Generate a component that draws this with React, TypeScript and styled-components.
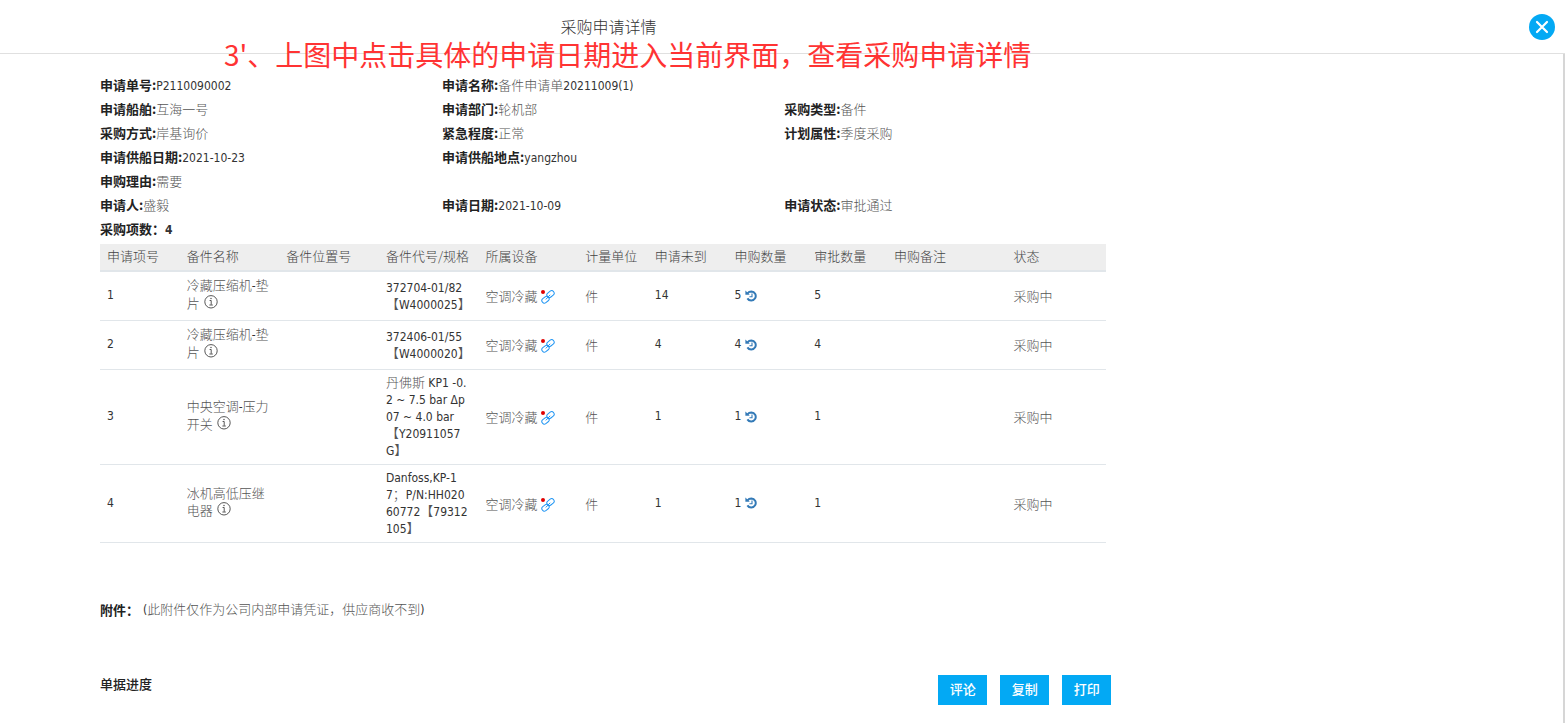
import React from 'react';
import styled, { createGlobalStyle } from 'styled-components';

const GlobalStyle = createGlobalStyle`
  * { box-sizing: border-box; }
  body {
    margin: 0;
    background: #fff;
    color: #555;
    font-family: "Noto Sans CJK SC", sans-serif;
    font-size: 13px;
    font-weight: 300;
    line-height: 17px;
  }
`;

const Page = styled.div`
  position: relative;
  display: flex;
  flex-direction: column;
  min-height: 100vh;
`;

const Header = styled.header`
  display: flex;
  align-items: center;
  height: 54px;
  padding-right: 10px;
  border-bottom: 1px solid #e0e0e0;
`;

const Title = styled.h1`
  flex: 1;
  margin: 0 312px 2px 0;
  text-align: center;
  font-size: 16px;
  font-weight: 300;
  line-height: 24px;
  color: #333;
`;

const CloseButton = styled.button`
  display: flex;
  align-items: center;
  justify-content: center;
  width: 26px;
  height: 26px;
  padding: 0;
  border: 0;
  border-radius: 50%;
  background: #03a9f4;
  cursor: pointer;
`;

const Note = styled.p`
  position: absolute;
  top: 40px;
  left: 224px;
  margin: 0;
  color: #ff3333;
  font-size: 28px;
  font-weight: 400;
  line-height: 28px;
  white-space: nowrap;
`;

const Body = styled.main`
  flex: 1;
  padding: 19px calc(29% - 2px) 18px 100px;
  border-right: 2px solid #d6d6d6;
`;

const Latin = styled.span`
  font-family: "DejaVu Sans Condensed", "DejaVu Sans", sans-serif;
  font-size: 12px;
  color: #333;
`;

const Details = styled.dl`
  display: grid;
  grid-template-columns: 34% 34% 1fr;
  grid-auto-rows: 24px;
  margin: 0 0 3px;
  line-height: 24px;
`;

const Field = styled.div<{ $column: number }>`
  grid-column: ${({ $column }) => $column};
  display: flex;
  white-space: nowrap;
`;

const Label = styled.dt`
  color: #222;
  font-weight: 700;
`;

const Value = styled.dd<{ $bold?: boolean }>`
  margin: 0;
  font-weight: ${({ $bold }) => ($bold ? 700 : 300)};
`;

const Record = styled.div`
  padding-right: 5px;
`;

const Table = styled.table`
  width: 100%;
  table-layout: fixed;
  border-collapse: separate;
  border-spacing: 0;
`;

const HeadCell = styled.th`
  height: 28px;
  padding: 0 7px 3px;
  background: #eee;
  border-bottom: 2px solid #e1e6ea;
  font-weight: 300;
  text-align: left;
  white-space: nowrap;
  color: #444;
`;

const Row = styled.tr`
  height: 49px;
`;

const Cell = styled.td`
  padding: 4px 7px 5px;
  border-bottom: 1px solid #e1e6ea;
  vertical-align: middle;
  white-space: nowrap;
`;

const NameCell = styled(Cell)`
  padding: 3px 7px 8px;
`;

const Line = styled.div<{ $gap?: number }>`
  display: flex;
  align-items: center;
  gap: ${({ $gap = 4 }) => $gap}px;
  height: 17px;
`;

const IconButton = styled.button`
  display: inline-flex;
  padding: 0;
  border: 0;
  background: none;
  cursor: pointer;
`;

const Attachment = styled.section`
  display: flex;
  align-items: center;
  gap: 4px;
  margin-top: 54px;
  line-height: 24px;
`;

const SectionTitle = styled.h2<{ $weight?: number }>`
  margin: 0;
  color: #222;
  font-size: 13px;
  font-weight: ${({ $weight = 700 }) => $weight};
  line-height: 17px;
`;

const Footer = styled.footer`
  display: flex;
  justify-content: space-between;
  align-items: flex-start;
  margin-top: 53px;
`;

const Actions = styled.div`
  display: flex;
  gap: 13px;
`;

const ActionButton = styled.button`
  min-width: 49px;
  height: 30px;
  padding: 0 11px 3px;
  border: 0;
  background: #03a9f4;
  color: #fff;
  font-family: inherit;
  font-size: 13px;
  font-weight: 500;
  cursor: pointer;
`;

/** Sets runs of Latin letters and digits in the Latin face. */
function Mixed({ children }: { children: string }) {
  const runs = children.split(/([\x20-\x7e\u0394]+)/).filter(Boolean);
  return (
    <span>
      {runs.map((run, i) =>
        /^[\x20-\x7e\u0394]/.test(run) ? <Latin key={i}>{run}</Latin> : <React.Fragment key={i}>{run}</React.Fragment>
      )}
    </span>
  );
}

const CloseIcon = () => (
  <svg width="14" height="14" viewBox="0 0 14 14" fill="none" stroke="#fff" strokeWidth="2.2" strokeLinecap="round" aria-hidden="true">
    <path d="M2 2l10 10M12 2L2 12" />
  </svg>
);

const InfoIcon = () => (
  <svg width="14" height="15" viewBox="0 0 14 15" fill="none" stroke="#444" strokeWidth=".9" aria-hidden="true">
    <circle cx="7" cy="6.8" r="6.2" />
    <path d="M5.6 5.5h1.6v4.2M5.4 10h3.4" />
    <circle cx="7" cy="3.5" r=".7" fill="#444" stroke="none" />
  </svg>
);

const LinkIcon = () => (
  <svg width="14" height="17" viewBox="0 -3 14 17" fill="none" stroke="#2196f3" aria-hidden="true">
    <rect x="5.6" y="1.6" width="7.8" height="5" rx="2.4" transform="rotate(-38 9.5 4.1)" />
    <rect x="0.6" y="7.2" width="7.8" height="5" rx="2.4" transform="rotate(-38 4.5 9.7)" />
    <path d="M4.8 9.4l4.4-4.6" />
    <circle cx="2" cy="2" r="2" fill="#e00000" stroke="none" />
  </svg>
);

const HistoryIcon = () => (
  <svg width="12" height="12" viewBox="0 0 12 12" fill="none" stroke="#337ab7" aria-hidden="true">
    <path d="M2.6 3.4C3.5 2.1 5 1.5 6.4 1.5a4.5 4.5 0 1 1-4 6.9" strokeWidth="2" />
    <path d="M.4.5v4.3h4.4z" fill="#337ab7" stroke="none" />
    <path d="M7 3.6v3.2H4.4" strokeWidth="1.1" />
  </svg>
);

const fields = [
  { label: '申请单号:', value: 'P2110090002', column: 1 },
  { label: '申请名称:', value: '备件申请单20211009(1)', column: 2 },
  { label: '申请船舶:', value: '互海一号', column: 1 },
  { label: '申请部门:', value: '轮机部', column: 2 },
  { label: '采购类型:', value: '备件', column: 3 },
  { label: '采购方式:', value: '岸基询价', column: 1 },
  { label: '紧急程度:', value: '正常', column: 2 },
  { label: '计划属性:', value: '季度采购', column: 3 },
  { label: '申请供船日期:', value: '2021-10-23', column: 1 },
  { label: '申请供船地点:', value: 'yangzhou', column: 2 },
  { label: '申购理由:', value: '需要', column: 1 },
  { label: '申请人:', value: '盛毅', column: 1 },
  { label: '申请日期:', value: '2021-10-09', column: 2 },
  { label: '申请状态:', value: '审批通过', column: 3 },
  { label: '采购项数：', value: '4', column: 1, bold: true },
];

/* Column weights; the fixed table layout scales them to the table's width. */
const columns: [string, number][] = [
  ['申请项号', 40], ['备件名称', 50], ['备件位置号', 50], ['备件代号/规格', 50], ['所属设备', 50], ['计量单位', 35],
  ['申请未到', 40], ['申购数量', 40], ['审批数量', 40], ['申购备注', 60], ['状态', 50],
];

const items = [
  { name: ['冷藏压缩机-垫', '片'], spec: ['372704-01/82', '【W4000025】'], pending: '14', qty: '5' },
  { name: ['冷藏压缩机-垫', '片'], spec: ['372406-01/55', '【W4000020】'], pending: '4', qty: '4' },
  { name: ['中央空调-压力', '开关'], spec: ['丹佛斯 KP1 -0.', '2 ~ 7.5 bar Δp', '07 ~ 4.0 bar', '【Y20911057', 'G】'], pending: '1', qty: '1' },
  { name: ['冰机高低压继', '电器'], spec: ['Danfoss,KP-1', '7；P/N:HH020', '60772【79312', '105】'], pending: '1', qty: '1' },
];

export default function App() {
  return (
    <Page>
      <GlobalStyle />
      <Header>
        <Title>采购申请详情</Title>
        <CloseButton type="button" aria-label="关闭"><CloseIcon /></CloseButton>
      </Header>
      <Body>
        <Record>
          <Details>
            {fields.map((f) => (
              <Field key={f.label} $column={f.column}>
                <Label>{f.label}</Label>
                <Value $bold={f.bold}><Mixed>{f.value}</Mixed></Value>
              </Field>
            ))}
          </Details>
          <Table>
            <colgroup>
              {columns.map(([title, width]) => <col key={title} width={width} />)}
            </colgroup>
            <thead>
              <tr>{columns.map(([title]) => <HeadCell key={title} scope="col">{title}</HeadCell>)}</tr>
            </thead>
            <tbody>
              {items.map((item, i) => (
                <Row key={i}>
                  <Cell><Line><Latin>{i + 1}</Latin></Line></Cell>
                  <NameCell>
                    <Line><Mixed>{item.name[0]}</Mixed></Line>
                    <Line>
                      {item.name[1]}
                      <IconButton type="button" aria-label="备件信息"><InfoIcon /></IconButton>
                    </Line>
                  </NameCell>
                  <Cell />
                  <Cell>{item.spec.map((line) => <Line key={line}><Mixed>{line}</Mixed></Line>)}</Cell>
                  <Cell>
                    <Line $gap={3}>
                      空调冷藏
                      <IconButton type="button" aria-label="关联设备"><LinkIcon /></IconButton>
                    </Line>
                  </Cell>
                  <Cell><Line>件</Line></Cell>
                  <Cell><Line><Latin>{item.pending}</Latin></Line></Cell>
                  <Cell>
                    <Line>
                      <Latin>{item.qty}</Latin>
                      <IconButton type="button" aria-label="数量记录"><HistoryIcon /></IconButton>
                    </Line>
                  </Cell>
                  <Cell><Line><Latin>{item.qty}</Latin></Line></Cell>
                  <Cell />
                  <Cell><Line>采购中</Line></Cell>
                </Row>
              ))}
            </tbody>
          </Table>
        </Record>
        <Attachment>
          <SectionTitle>附件：</SectionTitle>
          <Mixed>(此附件仅作为公司内部申请凭证，供应商收不到)</Mixed>
        </Attachment>
        <Footer>
          <SectionTitle $weight={500}>单据进度</SectionTitle>
          <Actions>
            <ActionButton type="button">评论</ActionButton>
            <ActionButton type="button">复制</ActionButton>
            <ActionButton type="button">打印</ActionButton>
          </Actions>
        </Footer>
      </Body>
      <Note>3'、上图中点击具体的申请日期进入当前界面，查看采购申请详情</Note>
    </Page>
  );
}
